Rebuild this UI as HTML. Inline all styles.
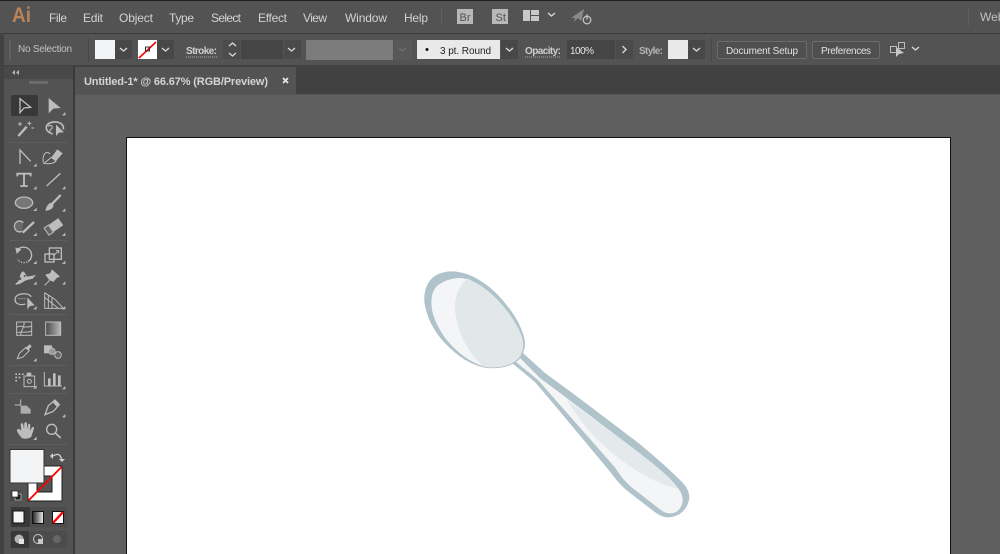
<!DOCTYPE html>
<html><head><meta charset="utf-8"><style>
html,body{margin:0;padding:0;width:1000px;height:554px;overflow:hidden;background:#5f5f5f}
svg{display:block}
text{font-family:"Liberation Sans",sans-serif;fill:#cfcfcf}
.m{font-size:12px;fill:#d2d2d2}
.c{font-size:10px;fill:#d8d8d8}
.ch{fill:none;stroke:#d8d8d8;stroke-width:1.4}
.t{fill:none;stroke:#bdbdbd;stroke-width:4}
.f{fill:#bdbdbd}
.tr{fill:#bdbdbd}
</style></head><body>
<svg width="1000" height="554" viewBox="0 0 1000 554" xmlns="http://www.w3.org/2000/svg">
<!-- base areas -->
<rect width="1000" height="554" fill="#5f5f5f"/>
<rect width="1000" height="33" fill="#535353"/>
<rect width="1000" height="1" fill="#1e1e1e"/>
<rect y="33" width="1000" height="33" fill="#424242"/>
<rect x="4" y="33" width="996" height="32" fill="#535353"/>
<rect x="4" y="33" width="996" height="1" fill="#3a3a3a"/>
<rect y="65" width="1000" height="30" fill="#414141"/>
<rect x="75" y="67" width="221" height="28" fill="#535353"/>
<rect x="75" y="94" width="925" height="1" fill="#575757"/>
<rect y="66" width="75" height="488" fill="#424242"/>
<rect x="4" y="66" width="69" height="488" fill="#535353"/>
<rect x="4" y="66" width="69" height="13" fill="#484848"/>
<rect x="73" y="66" width="2" height="488" fill="#3a3a3a"/>

<!-- menu -->
<text x="12" y="22" font-size="21" font-weight="bold" style="fill:#b9835c" textLength="19" lengthAdjust="spacingAndGlyphs">Ai</text>
<text class="m" x="49" y="22" textLength="18">File</text>
<text class="m" x="83" y="22" textLength="20">Edit</text>
<text class="m" x="119" y="22" textLength="34">Object</text>
<text class="m" x="169" y="22" textLength="25">Type</text>
<text class="m" x="211" y="22" textLength="30">Select</text>
<text class="m" x="258" y="22" textLength="29">Effect</text>
<text class="m" x="303" y="22" textLength="24">View</text>
<text class="m" x="345" y="22" textLength="42">Window</text>
<text class="m" x="404" y="22" textLength="24">Help</text>
<rect x="441" y="7" width="1" height="19" fill="#5e5e5e"/>
<rect x="457" y="9" width="16" height="15" fill="#b8b8b8"/>
<text x="459.500" y="21" font-size="11" style="fill:#555">Br</text>
<rect x="492" y="9" width="16" height="15" fill="#b8b8b8"/>
<text x="495.500" y="21" font-size="11" style="fill:#555">St</text>
<rect x="523" y="10" width="7" height="11" fill="#c8c8c8"/>
<rect x="531" y="10" width="8" height="5" fill="#c8c8c8"/>
<rect x="531" y="16" width="8" height="5" fill="#c8c8c8"/>
<polyline class="ch" points="548,13 551.500,16 555,13"/>
<path d="M571,18 L584,9 L581,21 L578,18 L574,22 L575,18Z" fill="#8a8a8a"/>
<circle cx="587" cy="20" r="3.800" fill="none" stroke="#c0c0c0" stroke-width="1.300"/>
<path d="M587,14.500V19.500" stroke="#c0c0c0" stroke-width="1.300"/>
<rect x="968" y="7" width="1" height="19" fill="#5e5e5e"/>
<text class="m" x="980" y="21" style="fill:#c2c2c2">Web</text>

<!-- control bar -->
<rect x="9" y="40" width="2" height="20" fill="#6a6a6a" opacity=".6"/>
<text class="c" x="18" y="52" textLength="54" style="fill:#c2c2c2">No Selection</text>
<rect x="88" y="38" width="1" height="24" fill="#484848"/>
<rect x="95" y="40" width="20" height="19" fill="#f3f4f6"/>
<rect x="115" y="40" width="17" height="19" fill="#484848"/>
<polyline class="ch" points="120,48 123.500,51 127,48"/>
<rect x="138" y="40" width="19" height="19" fill="#fff"/>
<line x1="139" y1="58" x2="156" y2="42" stroke="#f00" stroke-width="1.600"/>
<rect x="145.500" y="47" width="4" height="4" fill="none" stroke="#333" stroke-width="1"/>
<rect x="157" y="40" width="17" height="19" fill="#484848"/>
<polyline class="ch" points="162,48 165.500,51 169,48"/>
<text class="c" x="186" y="54" font-weight="bold" textLength="31" style="fill:#cfcfcf">Stroke:</text>
<line x1="186" y1="57" x2="217" y2="57" stroke="#aaa" stroke-width="1" stroke-dasharray="1 1"/>
<rect x="223" y="40" width="17" height="19" fill="#4c4c4c"/>
<polyline class="ch" points="229,46 232.500,43 236,46"/>
<polyline class="ch" points="229,53 232.500,56 236,53"/>
<rect x="241" y="40" width="42" height="19" fill="#454545"/>
<rect x="284" y="40" width="17" height="19" fill="#4a4a4a"/>
<polyline class="ch" points="288,48 291.500,51 295,48"/>
<rect x="306" y="40" width="87" height="20" fill="#7c7c7c"/>
<rect x="394" y="40" width="18" height="20" fill="#585858"/>
<polyline class="ch" points="399,48 402.500,51 406,48" style="stroke:#6e6e6e"/>
<rect x="417" y="40" width="83" height="19" fill="#e9e9e9"/>
<circle cx="427" cy="49.500" r="1.500" fill="#111"/>
<text x="440" y="54" font-size="10" textLength="51" style="fill:#222">3 pt. Round</text>
<rect x="501" y="40" width="17" height="19" fill="#484848"/>
<polyline class="ch" points="506,48 509.500,51 513,48"/>
<text class="c" x="525" y="54" font-weight="bold" textLength="36" style="fill:#cfcfcf">Opacity:</text>
<line x1="525" y1="57" x2="561" y2="57" stroke="#aaa" stroke-width="1" stroke-dasharray="1 1"/>
<rect x="567" y="40" width="48" height="19" fill="#454545"/>
<text class="c" x="570" y="54" textLength="24" style="fill:#e6e6e6">100%</text>
<rect x="616" y="40" width="17" height="19" fill="#4a4a4a"/>
<polyline class="ch" points="622.500,46 626,49.500 622.500,53"/>
<text class="c" x="639" y="54" font-weight="bold" textLength="24" style="fill:#b4b4b4">Style:</text>
<rect x="668" y="40" width="20" height="19" fill="#e9e9e9"/>
<rect x="688" y="40" width="17" height="19" fill="#484848"/>
<polyline class="ch" points="693,48 696.500,51 700,48"/>
<rect x="711" y="38" width="1" height="24" fill="#484848"/>
<rect x="717.500" y="41.500" width="89" height="17" rx="2" fill="#4f4f4f" stroke="#6c6c6c"/>
<text class="c" x="726" y="54" textLength="72" style="fill:#e0e0e0">Document Setup</text>
<rect x="812.500" y="41.500" width="67" height="17" rx="2" fill="#4f4f4f" stroke="#6c6c6c"/>
<text class="c" x="821" y="54" textLength="50" style="fill:#e0e0e0">Preferences</text>
<path d="M890.500,46.500h6v6h-6zM898.500,42.500h6v6h-6z" fill="none" stroke="#bdbdbd"/>
<path d="M896,47 L896,57 L899,54 L904,53Z" fill="#c8c8c8"/>
<polyline class="ch" points="912,47 915.500,50 919,47"/>

<!-- tab -->
<path d="M15,70 l-3,2.500 l3,2.500zM19,70 l-3,2.500 l3,2.500z" fill="#b4b4b4"/>
<text x="84" y="85" font-size="11" font-weight="bold" textLength="184" style="fill:#d4d4d4">Untitled-1* @ 66.67% (RGB/Preview)</text>
<path d="M283,78l5,5M288,78l-5,5" stroke="#e4e4e4" stroke-width="1.800"/>

<!-- artboard -->
<rect x="126.500" y="137.500" width="824" height="420" fill="#fff" stroke="#111"/>

<!-- spoon handle -->
<g transform="translate(530,380) scale(.33333)">
<path d="M-21,-81 L45,-21 L135,45 L320,185 C370,225 420,270 455,305 C475,325 480,345 477,360 C470,395 440,412 415,412 C395,412 385,403 370,393 L295,335 C270,315 255,295 240,275 L81,84 L15,6 L-54,-51Z" fill="#b0c2ca"/>
<path d="M-33,-69 L30,-6 L126,66 L310,205 C360,245 410,280 440,320 C462,345 462,365 450,385 C440,398 430,400 420,400 C405,400 398,393 390,388 L305,322 C283,303 268,283 255,262 L90,75 L24,0 L-42,-54Z" fill="#f4f5f7"/>
<path d="M110,58 L310,205 C360,245 410,280 440,325 C370,310 290,260 220,195 C170,150 135,100 110,58Z" fill="#e4e9ec"/>
</g>
<!-- spoon head -->
<g transform="translate(410,260) scale(.33333)">
<path d="M44,132 Q41,115 45,95 Q50,73 61,60 Q72,48 88,41 Q105,34 125,34 Q145,34 167,41 Q190,48 220,68 Q250,88 280,123 Q310,158 325,188 Q340,218 344,240 Q347,260 339,279 Q332,298 312,310 Q290,322 265,324 Q240,326 220,322 Q200,318 175,305 Q150,292 125,269 Q100,247 82,222 Q65,197 55,172 Q47,150 44,132Z" fill="#b0c2ca"/>
<path d="M65,142 Q63,125 66,107 Q70,90 80,79 Q90,69 110,61 Q130,54 150,54 Q170,54 200,70 Q230,87 260,117 Q290,148 310,180 Q330,212 336,233 Q343,255 336,275 Q330,296 310,307 Q290,319 265,321 Q240,323 225,320 Q210,317 187,305 Q165,293 142,273 Q120,254 102,229 Q85,204 76,182 Q67,160 65,142Z" fill="#f4f5f7"/>
<path d="M172,55 C145,80 132,115 135,150 C140,210 170,275 218,318 L225,320 Q240,323 265,321 Q290,319 310,307 Q330,296 336,275 Q343,255 336,233 Q330,212 310,180 Q290,148 260,117 Q230,87 200,70Z" fill="#e2e8ea"/>
</g>

<!-- tools top -->
<rect x="29" y="81" width="19" height="3" fill="#6c6c6c"/>
<rect x="11" y="95" width="27" height="21" rx="2" fill="#383838"/>
<rect x="10" y="142" width="57" height="1" fill="#5e5e5e"/>
<rect x="10" y="240" width="57" height="1" fill="#5e5e5e"/>
<rect x="10" y="314" width="57" height="1" fill="#5e5e5e"/>
<rect x="10" y="365" width="57" height="1" fill="#5e5e5e"/>
<rect x="10" y="393" width="57" height="1" fill="#5e5e5e"/>
<rect x="10" y="444" width="57" height="1" fill="#5e5e5e"/>

<g transform="translate(0,90) scale(.33333)">
<path class="t" d="M60,26 L60,68 L72,54 L92,52Z"/>
<path class="f" d="M146,24 L146,70 L160,56 L182,54Z"/>
<path class="tr" d="M196,66v10h-10z"/>
<path d="M55,138 L80,110" stroke="#bdbdbd" stroke-width="7"/>
<path class="t" d="M60,96v12M54,102h12M88,94v12M82,100h12M94,114h8" style="stroke-width:3"/>
<path class="t" d="M158,132 C134,126 130,100 160,96 C182,94 192,106 190,118" style="stroke-width:5"/>
<path class="t" d="M145,110 a6,6 0 1 1 6,8 l-2,12" style="stroke-width:3"/>
<path class="f" d="M168,104 L168,138 L177,128 L192,127Z"/>
<path class="t" d="M60,222 V180 L92,214"/>
<path class="tr" d="M110,220v10h-10z"/>
<path class="f" d="M154,202 L172,178 L188,190 L168,213Z"/>
<path class="t" d="M132,220 L154,202 L168,213 C160,222 145,222 132,220Z" style="stroke-width:3"/>
<path class="t" d="M130,218 C126,196 138,178 150,192" style="stroke-width:3"/>
<path d="M52,259 V251 H92 V259 M72,251 V288 M61,288 H83" stroke="#bdbdbd" stroke-width="5.500" fill="none"/>
<path class="tr" d="M110,288v10h-10z"/>
<path d="M140,288 L181,250" stroke="#bdbdbd" stroke-width="4"/>
<path class="tr" d="M196,288v10h-10z"/>
<ellipse cx="72" cy="338" rx="26" ry="17" fill="#777" stroke="#bdbdbd" stroke-width="4"/>
<path class="tr" d="M110,353v10h-10z"/>
<path d="M156,342 L182,315" stroke="#bdbdbd" stroke-width="7"/>
<path class="f" d="M136,362 C140,345 150,335 158,340 C165,348 155,362 136,362Z"/>
<path class="tr" d="M196,355v10h-10z"/>
<path d="M70,398 C55,385 40,400 44,414 C47,425 58,428 66,424" fill="#6a6a6a" stroke="#bdbdbd" stroke-width="4"/>
<path d="M68,428 L102,396" stroke="#bdbdbd" stroke-width="7"/>
<path class="tr" d="M110,428v10h-10z"/>
<g transform="translate(161,410) rotate(-35)"><rect x="-26" y="-13" width="52" height="26" fill="#bdbdbd"/><rect x="-26" y="-13" width="16" height="26" fill="#666" stroke="#bdbdbd" stroke-width="3"/></g>
<path class="tr" d="M196,428v10h-10z"/>
</g>

<g transform="translate(0,240) scale(.33333)">
<path class="t" d="M52,30 C62,18 85,18 93,36 C98,50 92,60 84,64"/>
<path class="t" d="M82,66 C72,70 60,68 52,58" stroke-dasharray="4 4"/>
<path class="f" d="M46,22 L64,28 L50,42Z"/>
<path class="tr" d="M110,62v10h-10z"/>
<rect x="135" y="42" width="27" height="24" class="t"/>
<rect x="148" y="24" width="36" height="34" class="t"/>
<path class="t" d="M160,48 L176,32 M168,32h8v8" style="stroke-width:3"/>
<path class="tr" d="M196,62v10h-10z"/>
<path class="f" d="M46,130 C62,126 56,106 66,96 C74,90 74,102 82,110 L108,105 L98,116 L82,120 C68,124 66,132 48,134Z"/>
<circle cx="60" cy="116" r="4" fill="#535353"/>
<circle cx="74" cy="108" r="3" fill="#535353"/>
<path class="tr" d="M110,124v10h-10z"/>
<path class="f" d="M156,88 L180,110 L170,114 L160,126 L146,118 L136,104 L150,100Z"/>
<path d="M134,136 L150,120" stroke="#bdbdbd" stroke-width="3"/>
<path class="tr" d="M196,124v10h-10z"/>
<path class="t" d="M76,192 C55,198 42,188 46,174 C50,160 82,156 94,170"/>
<path class="t" d="M55,176h24" stroke-dasharray="3 3" style="stroke-width:3"/>
<path class="f" d="M82,172 L82,208 L90,198 L104,196Z"/>
<path class="tr" d="M110,198v10h-10z"/>
<path class="t" d="M134,158 V205 H190 M134,158 L165,178 L190,205 M134,172 L175,205 M145,165 V205 M156,172 V205" style="stroke-width:3"/>
<path class="tr" d="M196,198v10h-10z"/>
<rect x="50" y="246" width="45" height="40" fill="none" stroke="#bdbdbd" stroke-width="3"/>
<path class="t" d="M50,262 C65,252 70,268 95,258 M62,286 C62,270 75,262 72,246 M52,278 C66,272 80,282 95,272" style="stroke-width:3"/>
<defs><linearGradient id="tg"><stop offset="0" stop-color="#4a4a4a"/><stop offset="1" stop-color="#b8b8b8"/></linearGradient>
<linearGradient id="tg2"><stop offset="0" stop-color="#222"/><stop offset="1" stop-color="#eee"/></linearGradient></defs>
<rect x="137" y="246" width="45" height="40" fill="url(#tg)" stroke="#bdbdbd" stroke-width="3"/>
<path d="M52,356 L58,340 L78,322 L88,332 L68,352Z" fill="none" stroke="#bdbdbd" stroke-width="3"/>
<path d="M80,328 L92,316" stroke="#bdbdbd" stroke-width="9"/>
<path class="tr" d="M110,354v10h-10z"/>
<rect x="132" y="316" width="24" height="24" class="f"/>
<circle cx="156" cy="334" r="10" fill="#9a9a9a" stroke="#bdbdbd" stroke-width="2"/>
<circle cx="174" cy="345" r="10" fill="#666" stroke="#bdbdbd" stroke-width="3"/>
<path class="f" d="M46,400h5v5h-5zM56,400h5v5h-5zM66,400h5v5h-5zM46,410h5v5h-5zM56,410h5v5h-5zM46,420h5v5h-5z"/>
<rect x="72" y="408" width="32" height="32" fill="none" stroke="#bdbdbd" stroke-width="3"/>
<rect x="80" y="398" width="14" height="10" class="f"/>
<circle cx="88" cy="424" r="6" fill="none" stroke="#bdbdbd" stroke-width="3"/>
<path class="tr" d="M110,436v10h-10z"/>
<path class="t" d="M133,396 V438 H186" style="stroke-width:3"/>
<path class="f" d="M144,415h8v23h-8zM159,400h8v38h-8zM174,406h8v32h-8z"/>
<path class="tr" d="M196,438v10h-10z"/>
</g>

<g transform="translate(0,394) scale(.33333)">
<path class="t" d="M62,16 V35 M44,33 H62" style="stroke-width:3"/>
<rect x="62" y="35" width="30" height="24" class="f" opacity=".85"/>
<path d="M80,35 L92,47 V35Z" fill="#535353"/>
<path class="t" d="M135,62 L145,35 L165,18 L178,32 L160,52Z"/>
<path class="f" d="M165,18 L178,32 L170,38 L158,25Z"/>
<path class="tr" d="M196,60v10h-10z"/>
<path class="f" d="M65,132 C58,122 48,112 52,106 C56,102 62,108 64,110 L62,92 C62,86 68,86 70,92 L72,106 L73,88 C75,83 80,83 81,88 V106 L84,92 C86,88 91,88 91,93 L90,110 L96,100 C99,97 103,99 102,104 L94,128 C90,134 72,136 65,132Z"/>
<path class="tr" d="M110,128v10h-10z"/>
<circle cx="155" cy="106" r="15" fill="none" stroke="#bdbdbd" stroke-width="4"/>
<path d="M166,117 L182,132" stroke="#bdbdbd" stroke-width="5"/>
</g>

<!-- colour swatches -->
<rect x="28" y="466" width="34" height="35" fill="#fff" stroke="#222"/>
<rect x="37" y="476" width="15" height="16" fill="#535353" stroke="#222"/>
<rect x="10" y="449.500" width="34" height="33.500" fill="#f3f4f6" stroke="#333"/>
<line x1="28.500" y1="500.500" x2="61.500" y2="467" stroke="#f00" stroke-width="1.800"/>
<path d="M53,456 C58,453 60,454 62,460" fill="none" stroke="#d0d0d0" stroke-width="1.300"/>
<path d="M53,453 V459 L50,456Z M59,459 H65 L62,462Z" fill="#d0d0d0"/>
<rect x="10" y="490" width="11" height="11" fill="#484848"/>
<rect x="15" y="494" width="6" height="6" fill="#222" stroke="#ccc" stroke-width=".7"/>
<rect x="12" y="491" width="6" height="6" fill="#fff" stroke="#222" stroke-width=".7"/>

<!-- modes -->
<rect x="10" y="507" width="57" height="20" fill="#4c4c4c"/>
<rect x="11" y="507" width="19" height="20" rx="1" fill="#383838"/>
<rect x="13" y="511" width="11" height="12" fill="#f3f4f6" stroke="#111"/>
<rect x="32.500" y="511.500" width="11" height="12" fill="url(#tg2)" stroke="#111"/>
<rect x="52.500" y="511.500" width="11" height="12" fill="#fff" stroke="#111"/>
<line x1="53" y1="523" x2="63" y2="512" stroke="#f00" stroke-width="2.400"/>
<rect x="10" y="531" width="57" height="17" fill="#4c4c4c"/>
<rect x="11" y="531" width="18" height="17" rx="1" fill="#383838"/>
<g fill="#b4b4b4"><circle cx="19" cy="539" r="4.500"/><rect x="19" y="539" width="5" height="5" fill="#e4e4e4"/>
<circle cx="38" cy="539" r="4.500" fill="none" stroke="#c8c8c8"/><rect x="38" y="539" width="5" height="5" fill="#c8c8c8"/>
<circle cx="57" cy="539" r="4" fill="#666"/></g>
</svg>
</body></html>
